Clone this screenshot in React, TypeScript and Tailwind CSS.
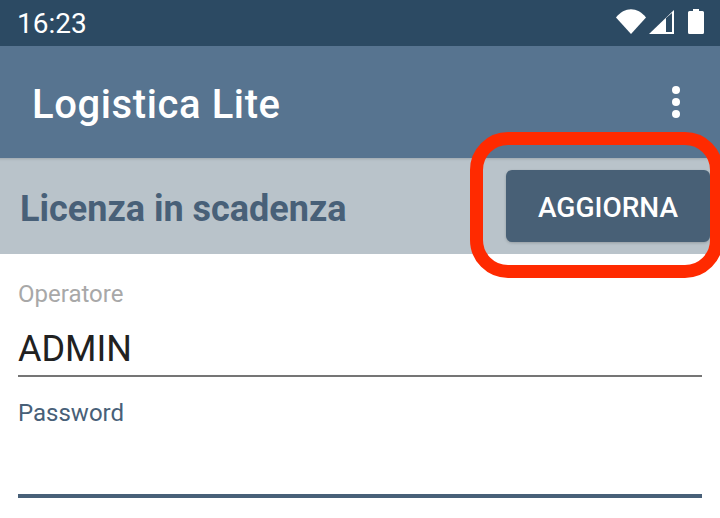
const roboto = "font-['Roboto',sans-serif]";

function StatusIcons() {
  return (
    <div className="flex items-center pb-[4px]">
      <svg width="32" height="26" viewBox="0 0 32 26" className="mr-[2px]">
        <path d="M1 9.5 C9.5 -1.5 22.5 -1.5 31 9.5 L16 26 Z" fill="#fff" />
      </svg>
      <svg width="26" height="26" viewBox="0 0 26 26" className="mr-[13px]">
        <path d="M25 2 V26 H0 Z" fill="#fff" />
        <path d="M17 10 L23 5 V24 H17 Z" fill="#2c4a63" />
      </svg>
      <svg width="16" height="26" viewBox="0 0 16 26">
        <path d="M5 1 H11 V3 H14.5 Q16 3 16 4.5 V24.5 Q16 26 14.5 26 H1.5 Q0 26 0 24.5 V4.5 Q0 3 1.5 3 H5 Z" fill="#fff" />
      </svg>
    </div>
  );
}

export default function App() {
  return (
    <div className={`relative h-[518px] w-[720px] overflow-hidden bg-white ${roboto}`}>
      {/* status bar */}
      <div className="flex h-[46px] items-center justify-between bg-[#2c4a63] pl-[17px] pr-[16px] text-white">
        <span className="pt-[1px] text-[28px] leading-none">16:23</span>
        <StatusIcons />
      </div>

      {/* app bar */}
      <div className="flex h-[112px] items-center justify-between bg-[#577490] pl-[32px] pr-[40px]">
        <h1 className="pt-[5px] text-[40px] font-medium leading-none tracking-[0.6px] text-white">Logistica Lite</h1>
        <div className="flex flex-col gap-[4px]">
          <span className="size-[8px] rounded-full bg-white" />
          <span className="size-[8px] rounded-full bg-white" />
          <span className="size-[8px] rounded-full bg-white" />
        </div>
      </div>

      {/* banner licenza */}
      <div className="flex h-[96px] items-center justify-between bg-[#b9c3ca] pl-[20px] pr-[10px] shadow-[inset_0_4px_3px_-3px_rgba(0,0,0,0.15)]">
        <span className="pt-[5px] text-[36px] font-bold leading-none text-[#486078]">Licenza in scadenza</span>
        <button className="flex h-[72px] w-[204px] items-center justify-center rounded-[6px] bg-[#486076] pt-[4px] text-[28px] font-medium text-white shadow-[0_1px_3px_rgba(0,0,0,0.2)]">
          AGGIORNA
        </button>
      </div>

      {/* form */}
      <div className="px-[18px]">
        <label className="mt-[26px] block text-[24px] leading-[28px] text-[#a8a8a8]">Operatore</label>
        <div className="mt-[19px] h-[50px] border-b-2 border-[#757575] text-[36px] leading-[44px] text-[#212121]">ADMIN</div>
        <label className="mt-[22px] block text-[24px] leading-[28px] text-[#486078]">Password</label>
        <div className="mt-[67px] h-[4px] bg-[#486078]" />
      </div>

      {/* evidenziazione rossa sopra il bottone */}
      <div className="absolute left-[470px] top-[132px] h-[146px] w-[253px] rounded-[38px] border-[13px] border-[#ff2a00]" />
    </div>
  );
}
